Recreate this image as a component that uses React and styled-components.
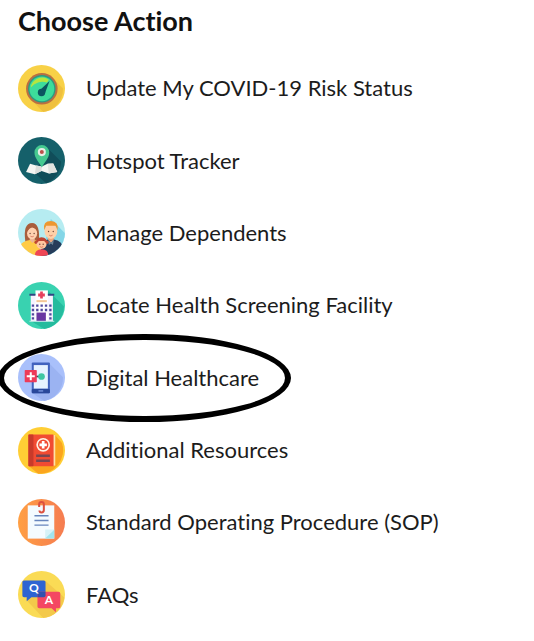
import styled, { createGlobalStyle } from "styled-components";

const actions = [
  { id: "risk", label: "Update My COVID-19 Risk Status", icon: GaugeIcon },
  { id: "hotspot", label: "Hotspot Tracker", icon: MapIcon },
  { id: "dependents", label: "Manage Dependents", icon: FamilyIcon },
  { id: "facility", label: "Locate Health Screening Facility", icon: HospitalIcon },
  { id: "digital", label: "Digital Healthcare", icon: PhoneIcon, circled: true },
  { id: "resources", label: "Additional Resources", icon: BookIcon },
  { id: "sop", label: "Standard Operating Procedure (SOP)", icon: PaperIcon },
  { id: "faqs", label: "FAQs", icon: FaqIcon },
];

export default function App() {
  return (
    <>
      <GlobalStyle />
      <Container>
        <Title>Choose Action</Title>
        <ActionList>
          {actions.map(({ id, label, icon: Icon, circled }) => (
            <ActionItem key={id}>
              <ActionLink href={`#${id}`}>
                <Icon />
                {label}
              </ActionLink>
              {circled && <Ring />}
            </ActionItem>
          ))}
        </ActionList>
      </Container>
    </>
  );
}

function GaugeIcon() {
  return (
    <Icon viewBox="0 0 140 140" aria-hidden="true">
      <circle cx="70" cy="70" r="70" fill="#f8d147" />
      <path d="M103 39 L134 70 A70 70 0 0 1 75 140 L39 103Z" fill="#efc03e" />
      <circle cx="71" cy="71" r="47" fill="#b96f42" />
      <circle cx="71" cy="71" r="41" fill="#2a9c82" />
      <circle cx="71" cy="71" r="37" fill="#3ddc9b" />
      <path d="M38 67 A34 34 0 0 1 92 44 L86 52 A44 44 0 0 0 38 67Z" fill="#b5e640" />
      <path d="M94 48 L79 88 L62 78Z" fill="#0b5560" />
      <circle cx="70" cy="82" r="11" fill="#0b5560" />
    </Icon>
  );
}

function MapIcon() {
  return (
    <Icon viewBox="0 0 140 140" aria-hidden="true">
      <circle cx="70" cy="70" r="70" fill="#15606a" />
      <path d="M87 32 L128 73 A70 70 0 0 1 84 138 L50 108Z" fill="#104d59" />
      <path d="M36 80 L54 85 L71 88 L88 80 L105 79 L117 104 L92 109 L70 101 L50 111 L24 104Z" fill="#f5f5f2" />
      <path d="M54 85 L71 88 L70 101 L50 111Z" fill="#dcdedb" />
      <path d="M88 80 L105 79 L117 104 L92 109Z" fill="#e1e3e0" />
      <path d="M71 91 C65 76 49 64 49 46 A22 22 0 0 1 93 46 C93 64 77 76 71 91Z" fill="#45c990" />
      <circle cx="71" cy="45" r="12" fill="#e7eee6" />
      <circle cx="71" cy="45" r="6" fill="#bc504b" />
    </Icon>
  );
}

function FamilyIcon() {
  return (
    <Icon viewBox="0 0 140 140" aria-hidden="true">
      <clipPath id="family-clip">
        <circle cx="70" cy="70" r="70" />
      </clipPath>
      <g clipPath="url(#family-clip)">
        <rect width="140" height="140" fill="#b6ecf1" />
        <path d="M98 30 L140 72 V140 H70Z" fill="#84d6e7" />
        <path d="M22 98 Q14 42 42 42 Q67 43 62 98Z" fill="#a95e3c" />
        <path d="M35 78 H50 V103 H35Z" fill="#edb493" />
        <path d="M3 112 Q14 94 35 92 L43 101 L52 92 Q66 98 66 120 V140 H3Z" fill="#ffcb45" />
        <ellipse cx="42" cy="72" rx="15" ry="18" fill="#ffd1b0" />
        <path d="M26 69 Q34 56 42 54 Q52 56 59 67 Q58 45 42 45 Q27 46 26 69Z" fill="#a95e3c" />
        <path d="M89 78 H107 V100 H89Z" fill="#e9a67e" />
        <path d="M68 122 Q66 96 89 91 L98 101 L107 91 Q132 94 136 120 V140 H68Z" fill="#263c5a" />
        <path d="M89 91 L98 101 L107 91 L104 107 L98 103 L92 107Z" fill="#6f8596" />
        <ellipse cx="98" cy="66" rx="19" ry="23" fill="#ffd0a8" />
        <path d="M78 63 Q73 36 98 36 Q122 37 118 63 L112 50 L84 50Z" fill="#ed972f" />
        <path d="M50 140 Q50 120 70 120 Q91 120 90 140Z" fill="#ef4655" />
        <circle cx="54" cy="99" r="5" fill="#bd4533" />
        <circle cx="86" cy="99" r="5" fill="#bd4533" />
        <circle cx="70" cy="104" r="15" fill="#ffc6a0" />
        <path d="M54 104 Q53 84 70 84 Q88 84 86 104 L78 95 L62 95Z" fill="#bd4533" />
        <g fill="#6b4034">
          <circle cx="36" cy="73" r="2" />
          <circle cx="48" cy="73" r="2" />
          <circle cx="91" cy="67" r="2" />
          <circle cx="105" cy="67" r="2" />
          <circle cx="65" cy="105" r="2" />
          <circle cx="75" cy="105" r="2" />
        </g>
        <path d="M37 81 Q42 85 47 81 M93 78 Q98 83 103 78 M65 112 Q70 116 75 112" fill="none" stroke="#cf5e4d" strokeWidth="2" />
      </g>
    </Icon>
  );
}

function HospitalIcon() {
  return (
    <Icon viewBox="0 0 140 140" aria-hidden="true">
      <circle cx="70" cy="70" r="70" fill="#39d2b0" />
      <path d="M90 26 L137 73 A70 70 0 0 1 78 140 L40 117Z" fill="#25bb9e" />
      <rect x="38" y="38" width="66" height="79" fill="#f7f3ff" />
      <rect x="52" y="25" width="37" height="92" fill="#ffffff" />
      <path d="M34 35 H52 V41 H34Z M89 35 H108 V41 H89Z" fill="#314582" />
      <path d="M66 28 H74 V34 H80 V43 H74 V49 H66 V43 H60 V34 H66Z" fill="#e7405e" />
      <rect x="55" y="54" width="31" height="6" fill="#f4c797" />
      <path
        d="M41 67h7v7h-7z M54 67h7v7h-7z M67 67h7v7h-7z M80 67h7v7h-7z M93 67h7v7h-7z M41 80h7v7h-7z M54 80h7v7h-7z M67 80h7v7h-7z M80 80h7v7h-7z M93 80h7v7h-7z M41 93h7v7h-7z M93 93h7v7h-7z M41 105h7v7h-7z M93 105h7v7h-7z"
        fill="#50489d"
      />
      <rect x="55" y="91" width="28" height="26" fill="#6936a2" />
      <path d="M34 117 H108" stroke="#bde8e5" strokeWidth="3" />
    </Icon>
  );
}

function PhoneIcon() {
  return (
    <Icon viewBox="0 0 140 140" aria-hidden="true">
      <circle cx="70" cy="70" r="70" fill="#a9c0fb" />
      <path d="M92 27 L134 69 A70 70 0 0 1 78 140 L43 117Z" fill="#9bb3f2" />
      <rect x="41" y="25" width="54" height="92" rx="3" fill="#4263be" />
      <rect x="47" y="33" width="42" height="70" fill="#e7f3ff" />
      <rect x="41" y="104" width="54" height="13" rx="3" fill="#29489b" />
      <rect x="61" y="108" width="14" height="4" fill="#7896df" />
      <path d="M52 67 H68" stroke="#39465f" strokeWidth="5" />
      <circle cx="70" cy="67" r="10" fill="#3fc7a2" />
      <rect x="20" y="48" width="36" height="36" rx="2" fill="#ed3b59" />
      <path d="M35 54 H41 V63 H50 V69 H41 V78 H35 V69 H26 V63 H35Z" fill="#fff" />
    </Icon>
  );
}

function BookIcon() {
  return (
    <Icon viewBox="0 0 140 140" aria-hidden="true">
      <circle cx="70" cy="70" r="70" fill="#ffce35" />
      <path d="M109 22 L131 48 A70 70 0 0 1 60 139 L33 117Z" fill="#fba51e" />
      <rect x="88" y="24" width="23" height="91" fill="#ffe1a8" />
      <rect x="31" y="22" width="75" height="95" rx="2" fill="#f14b32" />
      <rect x="31" y="22" width="15" height="95" rx="2" fill="#c83a2a" />
      <circle cx="75" cy="53" r="18" fill="#f14b32" stroke="#fff1e4" strokeWidth="5" />
      <path d="M71 42 H79 V49 H86 V57 H79 V64 H71 V57 H64 V49 H71Z" fill="#fff" />
      <path d="M54 82 H95 V89 H54Z M54 97 H95 V104 H54Z" fill="#764753" />
    </Icon>
  );
}

function PaperIcon() {
  return (
    <Icon viewBox="0 0 140 140" aria-hidden="true">
      <linearGradient id="paper-bg">
        <stop offset="0" stopColor="#ff9f43" />
        <stop offset="1" stopColor="#f57c51" />
      </linearGradient>
      <circle cx="70" cy="70" r="70" fill="url(#paper-bg)" />
      <path d="M29 19 H108 V118 H29Z" fill="#f4fbff" />
      <path d="M108 91 V118 H79Z" fill="#a1e4ee" />
      <path d="M81 91 H108 L81 118Z" fill="#d6f2f8" />
      <path d="M49 50 H91 M49 64 H91 M49 78 H91" stroke="#6685bd" strokeWidth="4" />
      <path d="M63 24 V16 Q63 9 70 9 Q77 9 77 16 V33 Q77 40 70 40 Q64 40 64 34" fill="none" stroke="#dc5140" strokeWidth="6" />
    </Icon>
  );
}

function FaqIcon() {
  return (
    <Icon viewBox="0 0 140 140" aria-hidden="true">
      <circle cx="70" cy="70" r="70" fill="#fadb55" />
      <path d="M82 30 L138 79 A70 70 0 0 1 75 140 L23 84Z" fill="#f3c94a" />
      <path d="M18 28 H77 Q82 28 82 33 V73 Q82 78 77 78 H40 L26 90 V78 H18 Q13 78 13 73 V33 Q13 28 18 28Z" fill="#2e64d2" />
      <path d="M63 62 H121 Q126 62 126 67 V106 Q126 111 121 111 H113 V123 L100 111 H63 Q58 111 58 106 V67 Q58 62 63 62Z" fill="#f44762" />
      <path d="M58 62 H82 V73 Q82 78 77 78 H58Z" fill="#3350ae" />
      <Letter x="47" y="64">Q</Letter>
      <Letter x="92" y="98">A</Letter>
    </Icon>
  );
}

const GlobalStyle = createGlobalStyle`
  * {
    box-sizing: border-box;
  }

  body {
    margin: 0;
    background-color: #ffffff;
    font-family: Lato, "Liberation Sans", sans-serif;
    font-variant-ligatures: none;
  }
`;

const Container = styled.main`
  display: flex;
  flex-direction: column;
  min-height: 100vh;
  padding: 4px 0 10px;
  overflow: hidden;
`;

const Title = styled.h1`
  margin: 0;
  padding: 0 18px 14px;
  font-size: 27px;
  font-weight: 700;
  line-height: 34px;
  color: #111111;
`;

const ActionList = styled.ul`
  flex: 1;
  display: grid;
  grid-auto-rows: 1fr;
  margin: 0;
  padding: 0;
  list-style: none;
`;

const ActionItem = styled.li`
  position: relative;
  display: flex;
`;

const ActionLink = styled.a`
  flex: 1;
  display: flex;
  align-items: center;
  gap: 21px;
  padding: 8px 18px;
  font-size: 22px;
  line-height: 28px;
  color: #1c1c1c;
  text-decoration: none;
`;

const Icon = styled.svg`
  flex: none;
  width: 47px;
  height: 47px;
`;

const Letter = styled.text`
  font-family: Lato, sans-serif;
  font-size: 36px;
  font-weight: 700;
  text-anchor: middle;
  fill: #ffffff;
`;

/* hand-drawn style highlight that spills over the rows around it */
const Ring = styled.span`
  position: absolute;
  top: -8px;
  bottom: -8px;
  left: -2px;
  width: 293px;
  border: 6px solid #000000;
  border-radius: 50%;
  pointer-events: none;
`;
